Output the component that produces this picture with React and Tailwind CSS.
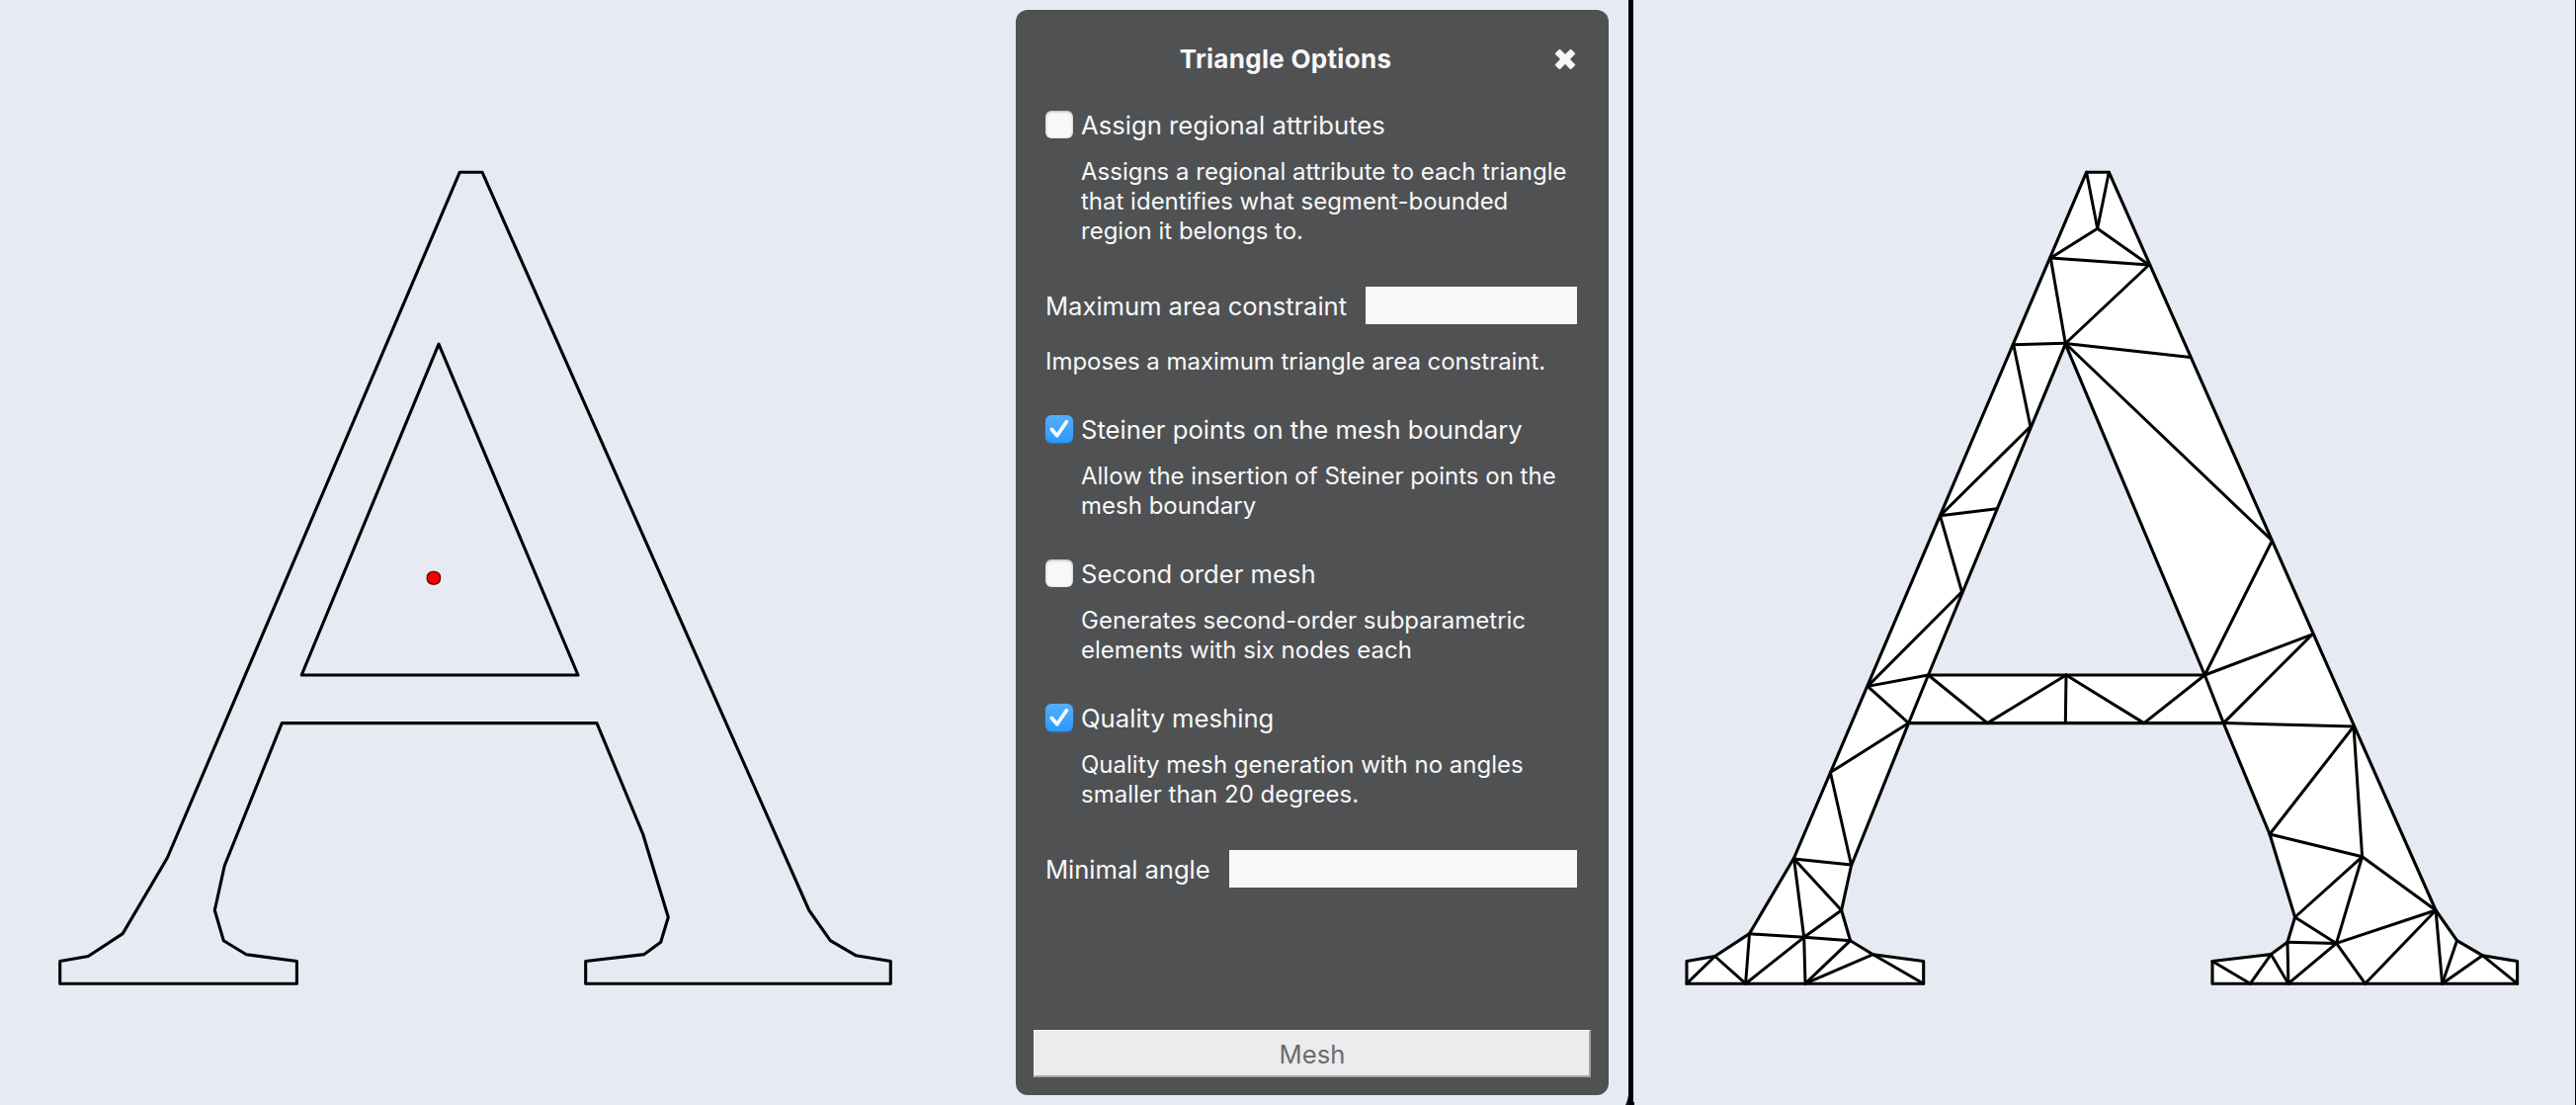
import React from "react";

// Outline of the letter, shared by both canvases.
const OUTER = [
  [60.7, 972.5], [89.3, 967.5], [124.2, 944.6], [169.3, 868], [465.3, 174.2], [488, 174.2],
  [818.8, 921], [840.3, 951.6], [866, 966.7], [901.3, 972.5], [901.3, 995.2], [592.7, 995.2],
  [592.7, 972.5], [652, 965.6], [668.7, 953.3], [676.3, 928], [650.7, 844], [604, 731.6],
  [285.3, 731.6], [227.2, 876], [217.3, 921], [226.3, 951.7], [249.3, 965.7], [300.4, 972.5],
  [300.4, 995.2], [60.7, 995.2],
];
const HOLE = [[444, 348.2], [585, 683], [305.2, 683]];
const SHIFT = 1646.3;

// Inner edges of the triangulation, as x1, y1, x2, y2.
const EDGES = [
  [2111.6, 174.2, 2122.7, 231.3],
  [2134.3, 174.2, 2122.7, 231.3],
  [2122.7, 231.3, 2075.3, 261],
  [2122.7, 231.3, 2174.9, 268],
  [2075.3, 261, 2174.9, 268],
  [2075.3, 261, 2090.3, 347.5],
  [2174.9, 268, 2090.3, 347.5],
  [2037.7, 348.7, 2090.3, 347.2],
  [2216.9, 361.5, 2090.3, 347.5],
  [2299.5, 547, 2090.3, 347.5],
  [2037.7, 348.7, 2054.9, 431.5],
  [2054.9, 431.5, 1963.5, 521.8],
  [1963.5, 521.8, 2020.9, 514.8],
  [1963.5, 521.8, 1985.5, 598.8],
  [1985.5, 598.8, 1890.1, 694.4],
  [1890.1, 694.4, 1951.5, 683],
  [1890.1, 694.4, 1931.6, 731.6],
  [1951.5, 683, 1931.6, 731.6],
  [1931.6, 731.6, 1852.4, 781.5],
  [1852.4, 781.5, 1873.5, 875],
  [1815.6, 869, 1873.5, 875],
  [1815.6, 869, 1863.6, 921],
  [1815.6, 869, 1825.7, 948.3],
  [1863.6, 921, 1825.7, 948.3],
  [1770.5, 944.8, 1825.7, 948.3],
  [1872.6, 951.7, 1825.7, 948.3],
  [1770.5, 944.8, 1766.6, 995.2],
  [1825.7, 948.3, 1766.6, 995.2],
  [1825.7, 948.3, 1827, 995.2],
  [1872.6, 951.7, 1827, 995.2],
  [1895.6, 965.7, 1827, 995.2],
  [1895.6, 965.7, 1946.7, 995.2],
  [1735.6, 967.5, 1707, 995.2],
  [1735.6, 967.5, 1766.6, 995.2],
  [1951.5, 683, 2011.4, 731.6],
  [2011.4, 731.6, 2091, 683],
  [2091, 683, 2090.3, 731.6],
  [2091, 683, 2169.8, 731.6],
  [2169.8, 731.6, 2231.3, 683],
  [2231.3, 683, 2250.3, 731.6],
  [2231.3, 683, 2299.5, 547],
  [2231.3, 683, 2340.2, 641.8],
  [2340.2, 641.8, 2250.3, 731.6],
  [2250.3, 731.6, 2382, 735],
  [2382, 735, 2297, 844],
  [2382, 735, 2390.6, 866.8],
  [2297, 844, 2390.6, 866.8],
  [2390.6, 866.8, 2322.6, 928],
  [2390.6, 866.8, 2364.5, 954.4],
  [2390.6, 866.8, 2465.1, 921],
  [2322.6, 928, 2364.5, 954.4],
  [2315, 953.3, 2364.5, 954.4],
  [2465.1, 921, 2364.5, 954.4],
  [2315, 953.3, 2315.9, 995.2],
  [2364.5, 954.4, 2315.9, 995.2],
  [2364.5, 954.4, 2393.6, 995.2],
  [2465.1, 921, 2393.6, 995.2],
  [2465.1, 921, 2471.6, 995.2],
  [2486.6, 951.6, 2471.6, 995.2],
  [2512.3, 966.7, 2471.6, 995.2],
  [2512.3, 966.7, 2547.6, 995.2],
  [2298.3, 965.6, 2315.9, 995.2],
  [2298.3, 965.6, 2277.4, 995.2],
  [2239, 972.5, 2277.4, 995.2],
];

const toPath = (pts, dx = 0) =>
  "M" + pts.map(([x, y]) => `${(x + dx).toFixed(1)} ${y}`).join("L") + "Z";

function Checkbox({ checked }) {
  return checked ? (
    <span className="h-7 w-7 shrink-0 rounded-[6px] bg-linear-to-b from-[#54aefc] to-[#2999fd] shadow-[0_1px_2px_rgba(40,150,255,0.45)]">
      <svg viewBox="0 0 28 28" className="block h-7 w-7">
        <path
          d="M6.4 14.4 L11.8 20.8 L21.4 6.8"
          fill="none"
          stroke="#f7f8fa"
          strokeWidth="3.8"
          strokeLinecap="round"
          strokeLinejoin="round"
        />
      </svg>
    </span>
  ) : (
    <span className="h-7 w-7 shrink-0 rounded-[6px] bg-[#f7f8fa] shadow-[inset_0_1px_3px_rgba(0,0,0,0.28),inset_0_0_1px_rgba(0,0,0,0.2)]" />
  );
}

function CheckOption({ label, checked, lines, className }) {
  return (
    <div className={className}>
      <label className="flex h-7 items-center gap-2 text-[25.65px] leading-7">
        <Checkbox checked={checked} />
        <span className="pt-[2px] whitespace-nowrap">{label}</span>
      </label>
      <div className="mt-[19px] pl-9 text-2xl leading-[30px] whitespace-nowrap">
        {lines.map((line) => (
          <p key={line}>{line}</p>
        ))}
      </div>
    </div>
  );
}

function Field({ label, inputClass }) {
  return (
    <label className="flex h-[38px] items-center justify-between text-[25.65px] leading-[38px]">
      <span className="pt-[2px] tracking-[-0.06px] whitespace-nowrap">{label}</span>
      <input className={inputClass} />
    </label>
  );
}

function OptionsPanel() {
  return (
    <section className="mt-[10px] flex h-[1098px] w-[600px] shrink-0 flex-col rounded-xl bg-[#505153] pt-[31px] pb-[18px] text-[#f7f8fa]">
      <div className="pr-8 pl-[30px]">
        <header className="flex h-9 items-center">
          <h1 className="flex-1 pt-px text-center text-[26px] leading-9 font-bold tracking-[0.3px]">
            Triangle Options
          </h1>
          <button className="flex w-[52px] justify-end pt-px pr-px" aria-label="Close">
            <svg viewBox="0 0 22 22" className="h-[22px] w-[22px]">
              <path
                d="M5.6 .9 L11 6.3 L16.4 .9 Q18.8 2.1 21 5.4 L15.7 10.9 L21 16.4 Q18.8 19.8 16.4 21 L11 15.5 L5.6 21 Q3.2 19.8 1 16.4 L6.3 10.9 L1 5.4 Q3.2 2.1 5.6 .9Z"
                fill="#f7f8fa"
                stroke="#f7f8fa"
                strokeWidth="0.6"
              />
            </svg>
          </button>
        </header>
        <CheckOption
          className="mt-[35px]"
          label="Assign regional attributes"
          lines={[
            "Assigns a regional attribute to each triangle",
            "that identifies what segment-bounded",
            "region it belongs to.",
          ]}
        />
        <div className="mt-[41px]">
          <Field
            label="Maximum area constraint"
            inputClass="h-[38px] w-[214px] bg-[#f7f8fa] px-2 text-black"
          />
          <p className="mt-[23px] text-2xl leading-[30px] tracking-[-0.04px] whitespace-nowrap">
            Imposes a maximum triangle area constraint.
          </p>
        </div>
        <CheckOption
          className="mt-[39px]"
          checked
          label="Steiner points on the mesh boundary"
          lines={["Allow the insertion of Steiner points on the", "mesh boundary"]}
        />
        <CheckOption
          className="mt-[39px]"
          label="Second order mesh"
          lines={["Generates second-order subparametric", "elements with six nodes each"]}
        />
        <CheckOption
          className="mt-[39px]"
          checked
          label="Quality meshing"
          lines={["Quality mesh generation with no angles", "smaller than 20 degrees."]}
        />
        <div className="mt-[41px]">
          <Field
            label="Minimal angle"
            inputClass="h-[38px] w-[352px] bg-[#f7f8fa] px-2 text-black"
          />
        </div>
      </div>
      <button className="mx-[18px] mt-auto flex h-12 items-center justify-center border-t-1 border-r-2 border-b-2 border-l-1 border-t-[#f7f8fa] border-r-[#a3a4a6] border-b-[#a3a4a6] border-l-[#f7f8fa] bg-[#ebecee] pt-[3px] pl-px text-[25.65px] text-[#6b6c6e]">
        Mesh
      </button>
    </section>
  );
}

export default function App() {
  return (
    <main className="flex h-[1118px] w-[2607px] overflow-hidden bg-[#e6ebf3] font-['Inter',sans-serif]">
      <svg viewBox="0 0 1028 1118" className="h-[1118px] w-[1028px] shrink-0">
        <g fill="none" stroke="#000" strokeWidth="3.1" strokeLinejoin="round">
          <path d={toPath(OUTER)} />
          <path d={toPath(HOLE)} />
        </g>
        <rect x="432.3" y="578.4" width="13.2" height="12.8" rx="5.6" fill="#f80000" stroke="#5a0006" strokeWidth="1.3" />
      </svg>
      <OptionsPanel />
      <svg viewBox="1628 0 25 1118" className="h-[1118px] w-[25px] shrink-0 overflow-visible">
        <path d="M1648.5 1103 Q1648 1112 1645 1118 H1649Z" fill="#1d1230" />
        <path d="M1648 0H1653V1115H1654V1118H1648Z" fill="#000" />
      </svg>
      <svg viewBox="1653 0 953 1118" className="h-[1118px] w-[953px] shrink-0">
        <path
          d={toPath(OUTER, SHIFT) + toPath(HOLE, SHIFT)}
          fill="#fff"
          fillRule="evenodd"
          stroke="#000"
          strokeWidth="3.1"
          strokeLinejoin="round"
        />
        <g stroke="#000" strokeWidth="3" strokeLinecap="round">
          {EDGES.map(([x1, y1, x2, y2], i) => (
            <line key={i} x1={x1} y1={y1} x2={x2} y2={y2} />
          ))}
        </g>
      </svg>
      <div className="w-px shrink-0 bg-black" />
    </main>
  );
}
